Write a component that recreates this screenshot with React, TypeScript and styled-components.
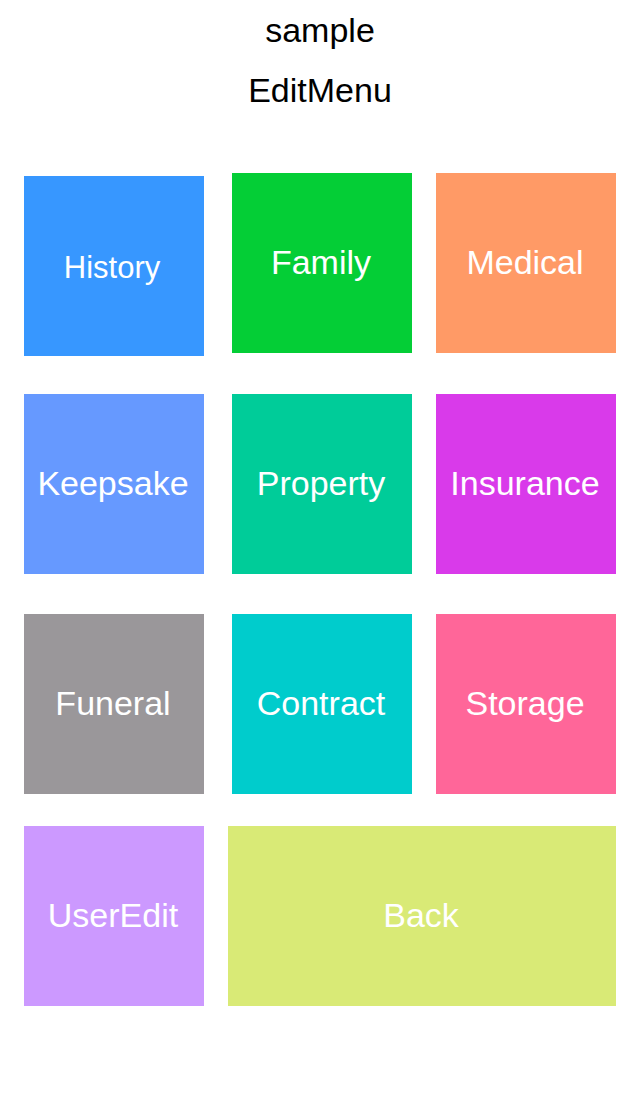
import React from "react";
import styled, { createGlobalStyle } from "styled-components";

const Global = createGlobalStyle`
  html, body { margin: 0; padding: 0; background: #ffffff; }
  body { font-family: "Liberation Sans", Arial, sans-serif; }
`;

const Page = styled.div`
  width: 640px;
  height: 1096px;
  background: #ffffff;
  display: flex;
  flex-direction: column;
  padding-top: 10px;
  box-sizing: border-box;
`;

const Header = styled.header`
  display: flex;
  flex-direction: column;
  align-items: center;
  gap: 20px;
`;

const Title = styled.div`
  font-size: 34px;
  line-height: 40px;
  color: #000000;
  text-align: center;
`;

const Grid = styled.div`
  display: flex;
  flex-direction: column;
  margin-top: 63px;
  padding-left: 24px;
`;

const Row = styled.div<{ $mt: number }>`
  display: flex;
  align-items: flex-start;
  margin-top: ${(p) => p.$mt}px;
`;

const Tile = styled.button<{
  $bg: string;
  $ml?: number;
  $mt?: number;
  $w?: number;
  $fs?: number;
  $pt?: number;
  $pb?: number;
  $pr?: number;
}>`
  all: unset;
  box-sizing: border-box;
  display: flex;
  align-items: center;
  justify-content: center;
  width: ${(p) => p.$w ?? 180}px;
  height: 180px;
  padding-top: ${(p) => p.$pt ?? 0}px;
  padding-bottom: ${(p) => p.$pb ?? 3}px;
  padding-right: ${(p) => p.$pr ?? 2}px;
  margin-left: ${(p) => p.$ml ?? 0}px;
  margin-top: ${(p) => p.$mt ?? 0}px;
  background: ${(p) => p.$bg};
  color: #ffffff;
  font-family: "Liberation Sans", Arial, sans-serif;
  font-size: ${(p) => p.$fs ?? 34}px;
  line-height: 40px;
  text-align: center;
  cursor: pointer;
`;

export default function App() {
  return (
    <>
      <Global />
      <Page>
        <Header>
          <Title>sample</Title>
          <Title>EditMenu</Title>
        </Header>
        <Grid>
          <Row $mt={0}>
            <Tile $bg="#3797FF" $mt={3} $fs={31} $pt={3} $pb={0} $pr={4}>History</Tile>
            <Tile $bg="#04CE36" $ml={28}>Family</Tile>
            <Tile $bg="#FF9A66" $ml={24}>Medical</Tile>
          </Row>
          <Row $mt={38}>
            <Tile $bg="#6699FF">Keepsake</Tile>
            <Tile $bg="#00CC99" $ml={28}>Property</Tile>
            <Tile $bg="#D93AEA" $ml={24}>Insurance</Tile>
          </Row>
          <Row $mt={40}>
            <Tile $bg="#9A979A">Funeral</Tile>
            <Tile $bg="#00CCCC" $ml={28}>Contract</Tile>
            <Tile $bg="#FF6699" $ml={24}>Storage</Tile>
          </Row>
          <Row $mt={32}>
            <Tile $bg="#CC99FF">UserEdit</Tile>
            <Tile $bg="#D9EA76" $ml={24} $w={388}>Back</Tile>
          </Row>
        </Grid>
      </Page>
    </>
  );
}
